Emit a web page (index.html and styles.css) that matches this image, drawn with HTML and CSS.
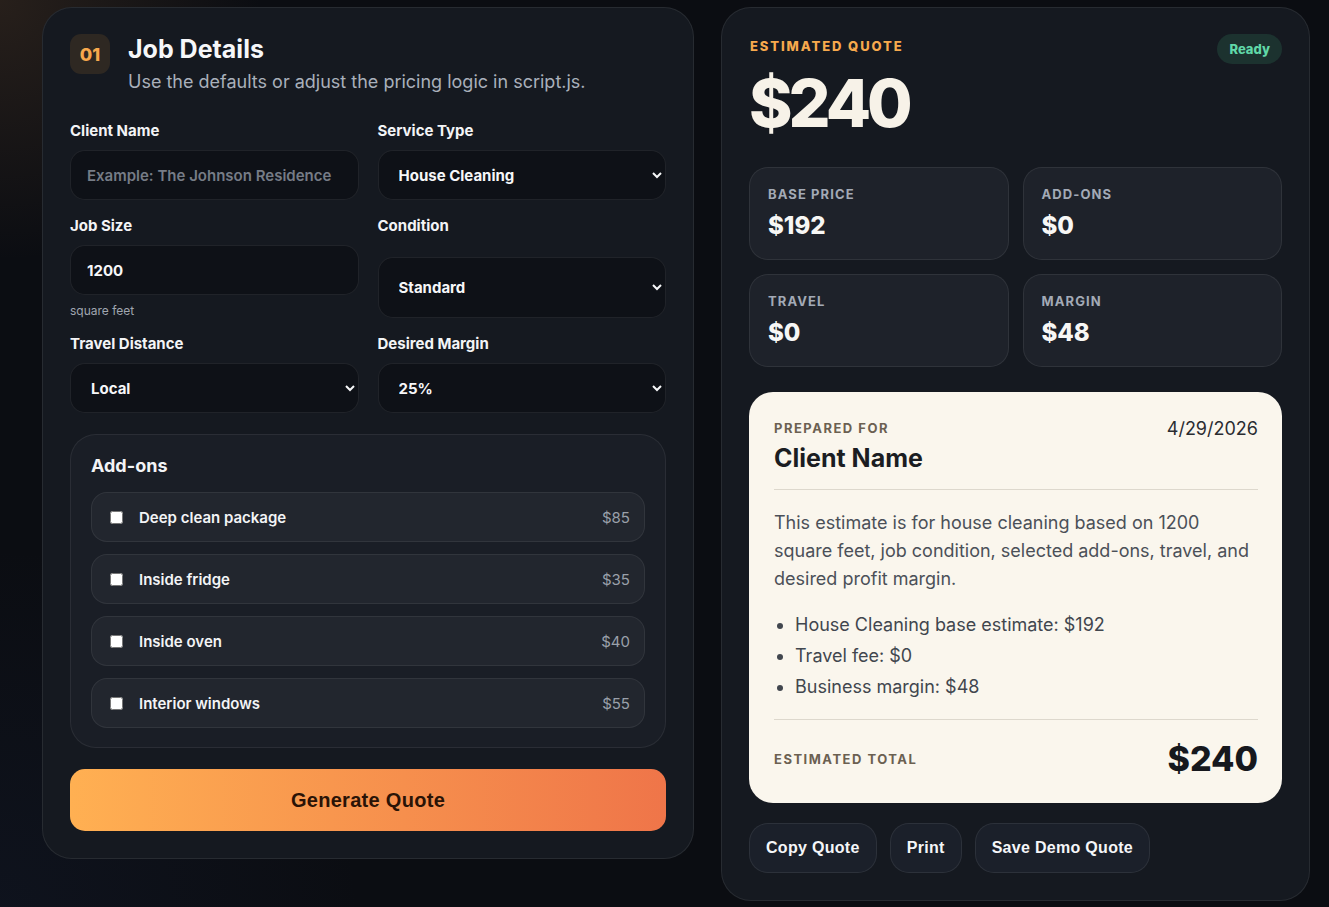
FILE: index.html
```html
<!DOCTYPE html>
<html lang="en">

<head>
    <meta charset="UTF-8">
    <title>Quote Builder</title>
    <link rel="stylesheet" href="styles.css">
</head>

<body>
    <div class="layout">
        <section class="card form-card">
            <div class="card-head">
                <span class="step">01</span>
                <div>
                    <h1>Job Details</h1>
                    <p>Use the defaults or adjust the pricing logic in script.js.</p>
                </div>
            </div>

            <div class="fields">
                <div class="field">
                    <label for="client">Client Name</label>
                    <input type="text" id="client" placeholder="Example: The Johnson Residence">
                </div>
                <div class="field">
                    <label for="service">Service Type</label>
                    <select id="service">
                        <option>House Cleaning</option>
                        <option>Office Cleaning</option>
                        <option>Move-out Cleaning</option>
                    </select>
                </div>
                <div class="field">
                    <label for="size">Job Size</label>
                    <input type="text" id="size" value="1200">
                    <small>square feet</small>
                </div>
                <div class="field">
                    <label for="condition">Condition</label>
                    <select id="condition">
                        <option>Standard</option>
                        <option>Heavy</option>
                    </select>
                </div>
                <div class="field">
                    <label for="travel">Travel Distance</label>
                    <select id="travel">
                        <option>Local</option>
                        <option>Extended</option>
                    </select>
                </div>
                <div class="field">
                    <label for="margin">Desired Margin</label>
                    <select id="margin">
                        <option>25%</option>
                        <option>30%</option>
                    </select>
                </div>
            </div>

            <div class="addons">
                <h3>Add-ons</h3>
                <label class="addon">
                    <input type="checkbox">
                    <span class="addon-name">Deep clean package</span>
                    <span class="addon-price">$85</span>
                </label>
                <label class="addon">
                    <input type="checkbox">
                    <span class="addon-name">Inside fridge</span>
                    <span class="addon-price">$35</span>
                </label>
                <label class="addon">
                    <input type="checkbox">
                    <span class="addon-name">Inside oven</span>
                    <span class="addon-price">$40</span>
                </label>
                <label class="addon">
                    <input type="checkbox">
                    <span class="addon-name">Interior windows</span>
                    <span class="addon-price">$55</span>
                </label>
            </div>

            <button class="btn-generate">Generate Quote</button>
        </section>

        <section class="card quote-card">
            <div class="quote-head">
                <span class="eyebrow">Estimated Quote</span>
                <span class="status">Ready</span>
            </div>
            <div class="big-total">$240</div>

            <div class="stats">
                <div class="stat">
                    <span>Base Price</span>
                    <strong>$192</strong>
                </div>
                <div class="stat">
                    <span>Add-ons</span>
                    <strong>$0</strong>
                </div>
                <div class="stat">
                    <span>Travel</span>
                    <strong>$0</strong>
                </div>
                <div class="stat">
                    <span>Margin</span>
                    <strong>$48</strong>
                </div>
            </div>

            <div class="sheet">
                <div class="sheet-top">
                    <div>
                        <div class="sheet-label">Prepared For</div>
                        <h2>Client Name</h2>
                    </div>
                    <span class="sheet-date">4/29/2026</span>
                </div>
                <p class="sheet-text">This estimate is for house cleaning based on 1200 square feet, job condition, selected add-ons, travel, and desired profit margin.</p>
                <ul class="sheet-list">
                    <li>House Cleaning base estimate: $192</li>
                    <li>Travel fee: $0</li>
                    <li>Business margin: $48</li>
                </ul>
                <div class="sheet-total">
                    <span class="sheet-label">Estimated Total</span>
                    <strong>$240</strong>
                </div>
            </div>

            <div class="actions">
                <button class="btn-ghost">Copy Quote</button>
                <button class="btn-ghost">Print</button>
                <button class="btn-ghost">Save Demo Quote</button>
            </div>
        </section>
    </div>
</body>

</html>
```

FILE: styles.css
```css
* {
    margin: 0;
    padding: 0;
    box-sizing: border-box;
}

body {
    font-family: "Inter", "Noto Sans", sans-serif;
    color: #f3f4f6;
    background-color: #0b0d12;
    background-image:
        radial-gradient(circle at 0 0, rgba(120, 84, 52, 0.26), transparent 260px),
        radial-gradient(circle at 0 100%, rgba(40, 60, 110, 0.12), transparent 360px);
    min-height: 100vh;
}

.layout {
    display: grid;
    grid-template-columns: 652px 1fr;
    gap: 27px;
    align-items: start;
    padding: 7px 19px 7px 42px;
}

.card {
    background-color: #151920;
    border: 1px solid rgba(255, 255, 255, 0.08);
    border-radius: 30px;
}

/* left side */

.form-card {
    padding: 26px 27px 27px;
}

.card-head {
    display: flex;
    gap: 18px;
    margin-bottom: 26px;
}

.step {
    flex: none;
    width: 40px;
    height: 40px;
    border-radius: 11px;
    background-color: #2e2822;
    color: #f7a94d;
    font-weight: 800;
    font-size: 18px;
    display: flex;
    align-items: center;
    justify-content: center;
}

.card-head h1 {
    font-size: 25px;
    line-height: 30px;
    font-weight: 700;
    color: #f6f7f9;
}

.card-head p {
    margin-top: 4px;
    font-size: 18px;
    line-height: 27px;
    color: #a9b0bb;
}

.fields {
    display: grid;
    grid-template-columns: 1fr 1fr;
    gap: 16px 19px;
}

.field {
    display: grid;
    gap: 9px;
}

.field label {
    font-size: 15px;
    line-height: 20px;
    font-weight: 700;
    color: #f3f4f6;
}

.field input,
.field select {
    width: 100%;
    height: 100%;
    min-height: 50px;
    border-radius: 15px;
    border: 1px solid rgba(255, 255, 255, 0.08);
    background-color: #0e1117;
    color: #f6f7f9;
    font-family: inherit;
    font-size: 15px;
    font-weight: 700;
    outline: none;
}

.field input {
    padding: 0 16px;
}

.field select {
    padding: 0 4px 0 16px;
}

.field input::placeholder {
    color: #767c86;
    font-weight: 600;
}

.field small {
    font-size: 12px;
    line-height: 15px;
    color: #a0a6b0;
    margin-top: -1px;
}

.addons {
    margin-top: 21px;
    padding: 20px 20px 19px;
    border-radius: 26px;
    background-color: #1a1e26;
    border: 1px solid rgba(255, 255, 255, 0.07);
    display: grid;
    gap: 12px;
}

.addons h3 {
    font-size: 18px;
    line-height: 22px;
    font-weight: 700;
    margin-bottom: 3px;
}

.addon {
    height: 50px;
    padding: 0 14px 0 18px;
    display: flex;
    align-items: center;
    gap: 16px;
    border-radius: 16px;
    background-color: #22262e;
    border: 1px solid rgba(255, 255, 255, 0.07);
}

.addon-name {
    flex: 1;
    font-size: 15px;
    font-weight: 600;
    color: #f3f4f6;
}

.addon-price {
    font-size: 15px;
    color: #9aa0aa;
}

.btn-generate {
    margin-top: 21px;
    width: 100%;
    height: 62px;
    border: none;
    border-radius: 15px;
    background: linear-gradient(90deg, #ffb052, #ef7549);
    color: #2a1306;
    font-family: "Liberation Sans", Arial, sans-serif;
    font-size: 20px;
    font-weight: 700;
    letter-spacing: 0.3px;
}

/* right side */

.quote-card {
    padding: 26px 27px 27px;
}

.quote-head {
    display: flex;
    justify-content: space-between;
    align-items: flex-start;
}

.eyebrow {
    padding: 4px 0 0 1px;
    font-size: 13px;
    line-height: 16px;
    font-weight: 800;
    letter-spacing: 1.9px;
    text-transform: uppercase;
    color: #f7a94d;
}

.status {
    height: 30px;
    padding: 0 12px;
    border-radius: 15px;
    background-color: #1c322f;
    color: #60d8a8;
    font-size: 13px;
    font-weight: 800;
    display: flex;
    align-items: center;
}

.big-total {
    margin-top: 6px;
    font-size: 66px;
    line-height: 66px;
    font-weight: 800;
    letter-spacing: -4px;
    color: #f7f2e8;
}

.stats {
    margin-top: 31px;
    display: grid;
    grid-template-columns: 1fr 1fr;
    gap: 14px;
}

.stat {
    padding: 18px;
    border-radius: 19px;
    background-color: #1e222a;
    border: 1px solid rgba(255, 255, 255, 0.08);
    display: flex;
    flex-direction: column;
    gap: 9px;
}

.stat span {
    font-size: 13px;
    line-height: 16px;
    font-weight: 700;
    letter-spacing: 1.1px;
    text-transform: uppercase;
    color: #a3aab6;
}

.stat strong {
    font-size: 24px;
    line-height: 30px;
    font-weight: 800;
    color: #f7f7f5;
}

.sheet {
    margin-top: 25px;
    padding: 28px 24px 24px 25px;
    border-radius: 24px;
    background-color: #faf6ed;
    color: #1b1d22;
}

.sheet-top {
    display: flex;
    justify-content: space-between;
    align-items: flex-start;
    padding-bottom: 16px;
    border-bottom: 1px solid #ddd8cd;
}

.sheet-label {
    font-size: 13px;
    line-height: 16px;
    font-weight: 700;
    letter-spacing: 1.5px;
    text-transform: uppercase;
    color: #6b6051;
}

.sheet-top h2 {
    margin-top: 7px;
    font-size: 25px;
    line-height: 30px;
    font-weight: 700;
}

.sheet-date {
    font-size: 18px;
    line-height: 18px;
    color: #2a2c31;
}

.sheet-text {
    margin-top: 19px;
    font-size: 18px;
    line-height: 28px;
    color: #4b5058;
}

.sheet-list {
    margin-top: 16px;
    padding-left: 21px;
    padding-bottom: 17px;
    border-bottom: 1px solid #ddd8cd;
    font-size: 18px;
    line-height: 31px;
    color: #41464e;
}

.sheet-total {
    margin-top: 19px;
    display: flex;
    justify-content: space-between;
    align-items: center;
}

.sheet-total strong {
    font-size: 34px;
    line-height: 40px;
    font-weight: 800;
    color: #16181d;
}

.actions {
    margin-top: 20px;
    display: flex;
    gap: 13px;
}

.btn-ghost {
    height: 50px;
    padding: 0 16px;
    border-radius: 19px;
    border: 1px solid rgba(255, 255, 255, 0.08);
    background-color: #1b202a;
    color: #f5f6f8;
    font-family: "Liberation Sans", Arial, sans-serif;
    font-size: 16px;
    font-weight: 700;
    letter-spacing: 0.3px;
}
```
